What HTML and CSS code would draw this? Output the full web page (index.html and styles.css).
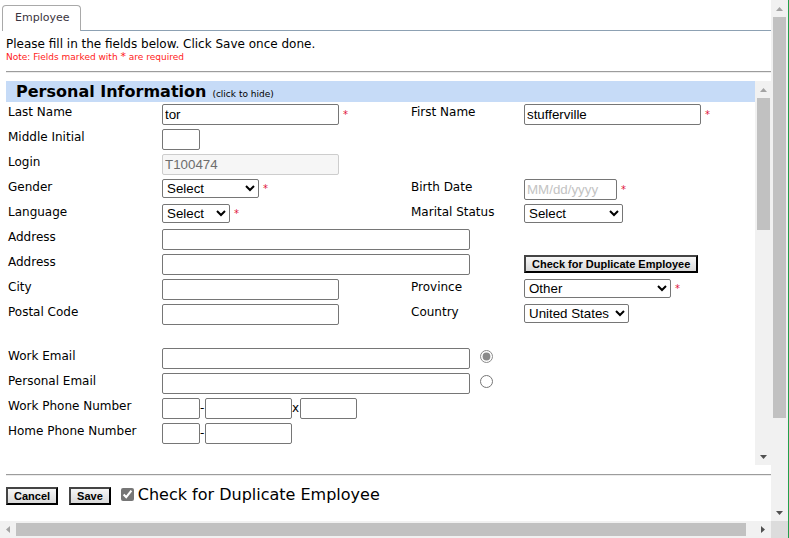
FILE: index.html
```html
<!DOCTYPE html>
<html>
<head>
<meta charset="utf-8">
<title>Employee</title>
<link rel="stylesheet" href="styles.css">
</head>
<body>
<div class="window">
  <div class="page">
    <div class="tabs">
      <div class="tab">Employee</div>
      <div class="tab-fill"></div>
    </div>
    <p class="lead">Please fill in the fields below. Click Save once done.</p>
    <p class="note">Note: Fields marked with <span class="note-star">*</span> are required</p>
    <div class="rule"></div>

    <div class="panel">
      <div class="panel-body">
        <div class="section-head"><span class="section-title">Personal Information</span><span class="section-hint">(click to hide)</span></div>
        <div class="form">
          <div class="row">
            <div class="label">Last Name</div>
            <div class="cell"><input class="field w177" type="text" value="tor"><span class="req">*</span></div>
            <div class="label">First Name</div>
            <div class="cell"><input class="field w177" type="text" value="stufferville"><span class="req">*</span></div>
          </div>
          <div class="row">
            <div class="label">Middle Initial</div>
            <div class="cell"><input class="field w38" type="text"></div>
          </div>
          <div class="row">
            <div class="label">Login</div>
            <div class="cell"><input class="field field-off w177" type="text" value="T100474" disabled></div>
          </div>
          <div class="row">
            <div class="label">Gender</div>
            <div class="cell"><select class="pick w97"><option>Select</option></select><span class="req">*</span></div>
            <div class="label">Birth Date</div>
            <div class="cell"><input class="field w93" type="text" placeholder="MM/dd/yyyy"><span class="req">*</span></div>
          </div>
          <div class="row">
            <div class="label">Language</div>
            <div class="cell"><select class="pick w68"><option>Select</option></select><span class="req">*</span></div>
            <div class="label">Marital Status</div>
            <div class="cell"><select class="pick w99"><option>Select</option></select></div>
          </div>
          <div class="row">
            <div class="label">Address</div>
            <div class="cell span2"><input class="field w308" type="text"></div>
          </div>
          <div class="row">
            <div class="label">Address</div>
            <div class="cell span2"><input class="field w308" type="text"></div>
            <div class="cell"><button class="btn btn-dup" type="button">Check for Duplicate Employee</button></div>
          </div>
          <div class="row">
            <div class="label">City</div>
            <div class="cell"><input class="field w177" type="text"></div>
            <div class="label">Province</div>
            <div class="cell"><select class="pick w147"><option>Other</option></select><span class="req">*</span></div>
          </div>
          <div class="row">
            <div class="label">Postal Code</div>
            <div class="cell"><input class="field w177" type="text"></div>
            <div class="label">Country</div>
            <div class="cell"><select class="pick w105"><option>United States</option></select></div>
          </div>
          <div class="spacer"></div>
          <div class="row">
            <div class="label">Work Email</div>
            <div class="cell span3"><input class="field w308" type="text"><input class="radio" type="radio" name="primary" checked></div>
          </div>
          <div class="row">
            <div class="label">Personal Email</div>
            <div class="cell span3"><input class="field w308" type="text"><input class="radio" type="radio" name="primary"></div>
          </div>
          <div class="row">
            <div class="label">Work Phone Number</div>
            <div class="cell span3"><input class="field w38" type="text"><span class="sep sep-dash">-</span><input class="field w87" type="text"><span class="sep sep-x">x</span><input class="field w57" type="text"></div>
          </div>
          <div class="row">
            <div class="label">Home Phone Number</div>
            <div class="cell span3"><input class="field w38" type="text"><span class="sep sep-dash">-</span><input class="field w87" type="text"></div>
          </div>
        </div>
      </div>
      <div class="vbar inner">
        <div class="sb-btn"><svg width="7" height="4" viewBox="0 0 7 4"><path d="M0 4L3.5 0L7 4Z" fill="#a3a3a3"/></svg></div>
        <div class="sb-track"><div class="sb-thumb"></div></div>
        <div class="sb-btn"><svg width="7" height="4" viewBox="0 0 7 4"><path d="M0 0L3.5 4L7 0Z" fill="#505050"/></svg></div>
      </div>
    </div>

    <div class="rule rule-bottom"></div>
    <div class="actions">
      <button class="btn" type="button">Cancel</button>
      <button class="btn btn-save" type="button">Save</button>
      <input class="check" type="checkbox" id="dup" checked>
      <label class="check-label" for="dup">Check for Duplicate Employee</label>
    </div>
  </div>

  <div class="vbar outer">
    <div class="sb-btn"><svg width="7" height="4" viewBox="0 0 7 4"><path d="M0 4L3.5 0L7 4Z" fill="#a3a3a3"/></svg></div>
    <div class="sb-track"><div class="sb-thumb"></div></div>
    <div class="sb-btn"><svg width="7" height="4" viewBox="0 0 7 4"><path d="M0 0L3.5 4L7 0Z" fill="#505050"/></svg></div>
  </div>
  <div class="hbar">
    <div class="sb-btn"><svg width="4" height="7" viewBox="0 0 4 7"><path d="M4 0L0 3.5L4 7Z" fill="#a3a3a3"/></svg></div>
    <div class="sb-track"><div class="sb-thumb"></div></div>
    <div class="sb-btn"><svg width="4" height="7" viewBox="0 0 4 7"><path d="M0 0L4 3.5L0 7Z" fill="#505050"/></svg></div>
  </div>
  <div class="corner"></div>
</div>
</body>
</html>
```

FILE: styles.css
```css
* { box-sizing: border-box; }
html, body { margin: 0; padding: 0; background: #fff; }
body {
  font-family: "DejaVu Sans", Verdana, sans-serif;
  font-size: 12px;
  color: #000;
}

.window {
  width: 789px;
  height: 538px;
  display: grid;
  grid-template-columns: 771px 17px;
  grid-template-rows: 521px 17px;
  border-right: 1px solid #22a04b;
  overflow: hidden;
}

.page { grid-column: 1; grid-row: 1; overflow: hidden; }

/* tabs */
.tabs { display: flex; align-items: flex-end; height: 31px; padding-left: 2px; }
.tab {
  width: 79px;
  height: 26px;
  border: 1px solid #a9a9a9;
  border-bottom: 0;
  border-radius: 4px 4px 0 0;
  background: #fff;
  padding: 5px 0 0 12px;
  font-size: 11px;
  line-height: 13px;
  color: #3a3440;
}
.tab-fill { flex: 1; height: 100%; border-bottom: 1px solid #8da1b3; }

.lead { margin: 6px 0 0; padding-left: 6px; font-size: 12px; line-height: 14px; }
.note { margin: 0; padding-left: 6px; font-size: 9px; line-height: 12px; color: #ff1a1a; }
.note-star { font-size: 11px; line-height: 9px; }

.rule {
  margin: 8px 0 0 6px;
  height: 2px;
  border-top: 1px solid #9c9c9c;
  border-bottom: 1px solid #ececec;
}
.rule-bottom { margin-top: 9px; }

/* panel */
.panel { margin-top: 8px; height: 384px; display: flex; }
.panel-body { flex: 1; overflow: hidden; padding-left: 6px; }

.section-head {
  height: 21px;
  background: #c6dbf7;
  padding-left: 10px;
  font-size: 16px;
  line-height: 21px;
  white-space: nowrap;
}
.section-title { font-weight: bold; }
.section-hint { font-size: 9px; margin-left: 6px; }

.form { margin: 2px 0 0 1px; }
.row {
  display: grid;
  grid-template-columns: 155px 248px 114px 1fr;
  height: 25px;
  align-items: start;
}
.spacer { height: 19px; }
.label { padding: 1px 0 0 1px; line-height: 15px; white-space: nowrap; }
.cell { display: flex; align-items: center; }
.span2 { grid-column: span 2; }
.span3 { grid-column: span 3; }

.field {
  height: 21px;
  margin: 0;
  border: 1px solid #767676;
  border-radius: 2px;
  padding: 0 2px;
  font-family: "Liberation Sans", Arial, sans-serif;
  font-size: 13.33px;
  color: #000;
  background: #fff;
}
.field::placeholder { color: #c3c3c3; }
.field-off { background: #f6f6f6; border-color: #cdcdcd; color: #6d6d6d; }

.pick {
  height: 19px;
  margin: 0;
  border: 1px solid #767676;
  border-radius: 2px;
  font-family: "Liberation Sans", Arial, sans-serif;
  font-size: 13.33px;
  color: #000;
  background: #fff;
}

.w38 { width: 38px; }
.w57 { width: 57px; }
.w68 { width: 68px; }
.w87 { width: 87px; }
.w93 { width: 93px; }
.w97 { width: 97px; }
.w99 { width: 99px; }
.w105 { width: 105px; }
.w147 { width: 147px; }
.w177 { width: 177px; }
.w308 { width: 308px; }

.req {
  margin-left: 4px;
  font-size: 10px;
  line-height: 10px;
  color: #e0143c;
}

.sep { font-size: 12px; line-height: 15px; }
.sep-dash { width: 5px; }
.sep-x { width: 8px; }

.radio {
  width: 13px;
  height: 13px;
  margin: 0 0 4px 10px;
  accent-color: #8a8a8a;
}

.btn {
  height: 18px;
  margin: 0;
  padding: 0 6px;
  border: 2px solid;
  border-color: #444 #000 #000 #444;
  background: linear-gradient(#f6f6f6, #d9d9d9);
  font-family: "Liberation Sans", Arial, sans-serif;
  font-size: 11px;
  font-weight: bold;
  line-height: 12px;
  color: #000;
  white-space: nowrap;
}
.btn-dup { margin-top: 1px; }
.btn-save { margin-left: 11px; }

.actions { display: flex; align-items: flex-start; padding: 11px 0 0 6px; }
.check {
  width: 13px;
  height: 13px;
  margin: 1px 0 0 10px;
  accent-color: #767676;
}
.check-label { margin: -1px 0 0 4px; font-size: 16px; line-height: 18px; }

/* scrollbars */
.vbar { display: flex; flex-direction: column; background: #f1f1f1; }
.vbar.outer { grid-column: 2; grid-row: 1; }
.vbar.inner { width: 16px; flex: none; }
.sb-btn { flex: none; height: 17px; display: flex; align-items: center; justify-content: center; }
.sb-track { flex: 1; }
.sb-thumb { background: #c1c1c1; }
.outer .sb-track { padding: 0 2px; }
.outer .sb-thumb { height: 401px; }
.inner .sb-track { padding: 0 1px 0 2px; }
.inner .sb-thumb { height: 132px; }

.hbar { grid-column: 1; grid-row: 2; display: flex; background: #f1f1f1; }
.hbar .sb-btn { width: 16px; height: 17px; }
.hbar .sb-track { padding: 2px 0; }
.hbar .sb-thumb { width: 730px; height: 13px; }
.corner { grid-column: 2; grid-row: 2; background: #dcdcdc; }
```
